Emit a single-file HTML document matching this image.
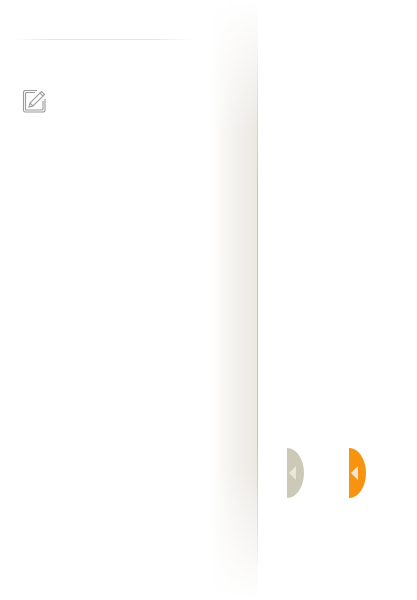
<!DOCTYPE html>
<html><head><meta charset="utf-8"><style>
html,body{margin:0;padding:0;width:417px;height:600px;background:#fff;overflow:hidden;position:relative;font-family:"Liberation Sans",sans-serif}
.shadow{position:absolute;left:210px;top:0;width:48px;height:600px;
background:linear-gradient(to right,rgba(236,232,226,0),rgba(236,233,227,.5) 40%,#ebe8e2 100%);
-webkit-mask-image:linear-gradient(to bottom,transparent 0,#000 22%,#000 78%,transparent 100%);
mask-image:linear-gradient(to bottom,transparent 0,#000 22%,#000 78%,transparent 100%)}
.edge{position:absolute;left:257px;top:0;width:1px;height:600px;background:#c9c5b8;
-webkit-mask-image:linear-gradient(to bottom,transparent 8%,#000 30%,#000 75%,transparent 95%);
mask-image:linear-gradient(to bottom,transparent 8%,#000 30%,#000 75%,transparent 95%)}
.line{position:absolute;left:14px;top:39px;width:178px;height:1px;background:linear-gradient(to right,rgba(230,228,224,0),#e8e6e2 20%,#e8e6e2 80%,rgba(230,228,224,0))}
.semi{position:absolute;top:448px;width:17px;height:50px;border-radius:0 17px 17px 0/0 25px 25px 0}
.tri{position:absolute;top:18px;left:2px;width:0;height:0;border-top:7.5px solid transparent;border-bottom:7.5px solid transparent;border-right:7px solid #ece6d8}
</style></head><body>
<div class="shadow"></div>
<div class="edge"></div>
<div class="line"></div>
<svg style="position:absolute;left:22px;top:89px" width="25" height="25" viewBox="0 0 25 25" fill="none" stroke="#9a9a9a" stroke-width="1.1">
<path d="M15 1.5 H3 A2 2 0 0 0 1.5 3.5 V21.5 A2 2 0 0 0 3.5 23 H21.5 A2 2 0 0 0 23 21 V10"/>
<path d="M13 3.5 H4.5 A1 1 0 0 0 3.5 4.5 V20 A1 1 0 0 0 4.5 21 H20 A1 1 0 0 0 21 20 V12"/>
<path d="M7 18 L8 14 L19.5 2.5 L22.5 5.5 L11 17 Z M8 14 L11 17 M18 4 L21 7"/>
</svg>
<div class="semi" style="left:287px;background:#cdc9b9"><div class="tri"></div></div>
<div class="semi" style="left:349px;background:#f7930f"><div class="tri"></div></div>
</body></html>
